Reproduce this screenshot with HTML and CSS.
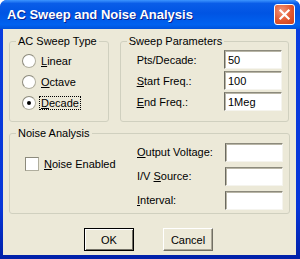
FILE: index.html
```html
<!DOCTYPE html>
<html>
<head>
    <title>AC Sweep and Noise Analysis</title>
    <link rel="stylesheet" href="styles.css">
</head>
<body>
    <div class="window">
        <div class="titlebar">
            <span class="title">AC Sweep and Noise Analysis</span>
            <span class="close">
                <svg width="21" height="21" viewBox="0 0 21 21">
                    <path d="M6 6 L15 15 M15 6 L6 15" stroke="#fff" stroke-width="2.4" stroke-linecap="square"/>
                </svg>
            </span>
        </div>
        <div class="client">
            <div class="top-row">
                <fieldset class="group sweep-type">
                    <legend>AC Sweep Type</legend>
                    <div class="group-body">
                        <label class="radio"><span class="circle"></span><span><u>L</u>inear</span></label>
                        <label class="radio"><span class="circle"></span><span><u>O</u>ctave</span></label>
                        <label class="radio"><span class="circle checked"></span><span class="focus"><u>D</u>ecade</span></label>
                    </div>
                </fieldset>
                <fieldset class="group sweep-params">
                    <legend>Sweep Parameters</legend>
                    <div class="group-body">
                        <div class="field"><label>Pts/Decade:</label><input type="text" value="50"></div>
                        <div class="field"><label><u>S</u>tart Freq.:</label><input type="text" value="100"></div>
                        <div class="field"><label><u>E</u>nd Freq.:</label><input type="text" value="1Meg"></div>
                    </div>
                </fieldset>
            </div>
            <fieldset class="group noise">
                <legend>Noise Analysis</legend>
                <div class="group-body">
                    <label class="check"><span class="box"></span><span><u>N</u>oise Enabled</span></label>
                    <div class="noise-fields">
                        <div class="field"><label><u>O</u>utput Voltage:</label><input type="text"></div>
                        <div class="field"><label>I/V <u>S</u>ource:</label><input type="text"></div>
                        <div class="field"><label><u>I</u>nterval:</label><input type="text"></div>
                    </div>
                </div>
            </fieldset>
            <div class="buttons">
                <button type="button" class="btn default">OK</button>
                <button type="button" class="btn">Cancel</button>
            </div>
        </div>
    </div>
</body>
</html>
```

FILE: styles.css
```css
html, body {
    margin: 0;
    padding: 0;
    background-color: #ffffff;
}

body {
    font-family: "Liberation Sans", Arial, sans-serif;
    font-size: 11px;
    color: #000000;
}

.window {
    width: 300px;
    height: 259px;
    display: flex;
    flex-direction: column;
    background: linear-gradient(to bottom, #0a3ee0 0%, #0736d8 80%, #0020a8 100%);
    border-radius: 7px 7px 0 0;
    overflow: hidden;
}

.titlebar {
    height: 29px;
    flex: none;
    display: flex;
    align-items: center;
    padding: 0 5px 0 7px;
    background: linear-gradient(to bottom, #3d95ff 0%, #0a5de8 12%, #0054e3 45%, #0062f0 85%, #0052da 100%);
    color: #ffffff;
}

.title {
    flex: 1;
    font-weight: bold;
    font-size: 13px;
    text-shadow: 1px 1px 0 #0a1f8c;
}

.close {
    width: 21px;
    height: 21px;
    box-sizing: border-box;
    border: 1px solid #ffffff;
    border-radius: 3px;
    background: radial-gradient(circle at 35% 30%, #f3957b 0%, #e2572f 55%, #c9401c 100%);
    display: flex;
    align-items: center;
    justify-content: center;
}

.close svg {
    display: block;
}

.client {
    flex: 1;
    margin: 0 4px 4px 3px;
    background-color: #ece9d8;
    padding: 6px 7px 0 6px;
}

.top-row {
    display: flex;
    gap: 11px;
}

.group {
    margin: 0;
    padding: 0;
    border: 1px solid #d0d0bf;
    border-radius: 3px;
    box-sizing: border-box;
    min-width: 0;
}

.group legend {
    padding: 0 2px;
    margin-left: 6px;
    line-height: 13px;
    white-space: nowrap;
}

.sweep-type {
    width: 100px;
    height: 87px;
}

.sweep-type .group-body {
    padding: 2px 0 0 12px;
}

.sweep-params {
    width: 170px;
    height: 87px;
}

.sweep-params .group-body {
    padding: 1px 6px 0 16px;
}

.radio {
    display: flex;
    align-items: center;
    height: 21px;
    gap: 5px;
}

.circle {
    width: 12px;
    height: 12px;
    border-radius: 50%;
    background: #ffffff;
    border: 1px solid #b0ae9e;
    border-top-color: #8c8a7c;
    border-left-color: #8c8a7c;
    position: relative;
}

.circle.checked::after {
    content: "";
    position: absolute;
    left: 4px;
    top: 4px;
    width: 4px;
    height: 4px;
    border-radius: 50%;
    background: #000000;
}

.focus {
    outline: 1px dotted #000000;
    padding: 0 1px;
    margin-left: -1px;
}

.field {
    display: flex;
    align-items: center;
    justify-content: space-between;
    height: 21px;
}

.field input {
    width: 58px;
    height: 19px;
    box-sizing: border-box;
    padding: 0 3px;
    font-family: "Liberation Sans", Arial, sans-serif;
    font-size: 11px;
    color: #000000;
    background: #ffffff;
    border: 1px solid;
    border-color: #8c8a7c #f5f4ee #f5f4ee #6b6a60;
    box-shadow: inset 1px 1px 0 #b8b5a6;
    outline: none;
}

.noise {
    margin-top: 5px;
    width: 281px;
    height: 87px;
}

.noise .group-body {
    display: flex;
    padding: 0 6px 0 15px;
}

.check {
    display: flex;
    align-items: center;
    gap: 5px;
    height: 19px;
    margin-top: 14px;
    width: 112px;
}

.box {
    width: 12px;
    height: 12px;
    background: #ffffff;
    border: 1px solid #b0ae9e;
    border-top-color: #8c8a7c;
    border-left-color: #8c8a7c;
}

.noise-fields {
    flex: 1;
}

.noise-fields .field {
    height: 24px;
}

.buttons {
    display: flex;
    gap: 29px;
    padding: 14px 0 0 75px;
}

.btn {
    width: 50px;
    height: 23px;
    box-sizing: border-box;
    font-family: "Liberation Sans", Arial, sans-serif;
    font-size: 11px;
    color: #000000;
    background-color: #ece9d8;
    border: 1px solid;
    border-color: #ffffff #716f64 #716f64 #ffffff;
    box-shadow: inset -1px -1px 0 #aca899;
    padding: 0;
}

.btn.default {
    border: 1px solid #000000;
    box-shadow: inset 1px 1px 0 #ffffff, inset -1px -1px 0 #716f64;
}
```
